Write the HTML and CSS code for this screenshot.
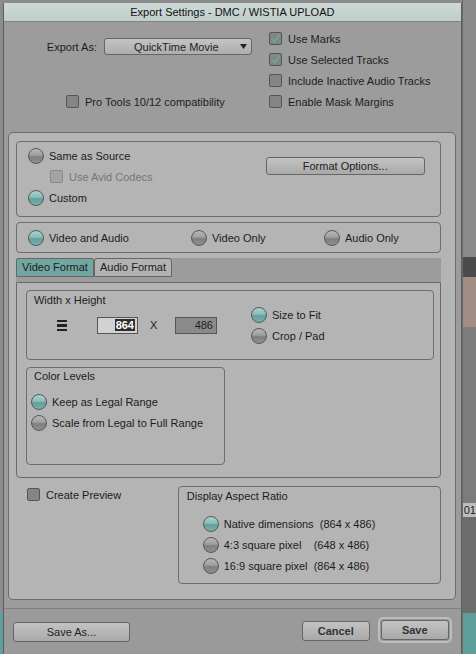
FILE: index.html
```html
<!DOCTYPE html>
<html>
<head>
<meta charset="utf-8">
<title>Export Settings</title>
<link rel="stylesheet" href="styles.css">
</head>
<body>
<div class="screen">
  <div class="edge-left"></div>
  <div class="window">
    <div class="titlebar">Export Settings - DMC / WISTIA UPLOAD</div>

    <div class="top">
      <div class="top-left">
        <div class="export-row">
          <span class="export-label">Export As:</span>
          <div class="dropdown">
            <span class="dropdown-text">QuickTime Movie</span>
            <svg class="dropdown-arrow" width="7" height="5" viewBox="0 0 7 5"><path d="M0 0H7L3.5 5Z" fill="#222"/></svg>
          </div>
        </div>
        <div class="check-row protools"><span class="cb"></span><span>Pro Tools 10/12 compatibility</span></div>
      </div>
      <div class="top-right">
        <div class="check-row"><span class="cb checked"><svg width="11" height="11" viewBox="0 0 11 11"><path d="M2 6 L4.5 9 L9.5 1.5" fill="none" stroke="#62aaa5" stroke-width="1.6"/></svg></span><span>Use Marks</span></div>
        <div class="check-row"><span class="cb checked"><svg width="11" height="11" viewBox="0 0 11 11"><path d="M2 6 L4.5 9 L9.5 1.5" fill="none" stroke="#62aaa5" stroke-width="1.6"/></svg></span><span>Use Selected Tracks</span></div>
        <div class="check-row"><span class="cb"></span><span>Include Inactive Audio Tracks</span></div>
        <div class="check-row"><span class="cb"></span><span>Enable Mask Margins</span></div>
      </div>
    </div>

    <div class="panel">
      <div class="group source">
        <div class="source-col">
          <div class="radio-row"><span class="radio"></span><span>Same as Source</span></div>
          <div class="check-row avid disabled"><span class="cb"></span><span>Use Avid Codecs</span></div>
          <div class="radio-row"><span class="radio on"></span><span>Custom</span></div>
        </div>
        <button class="btn format-btn">Format Options...</button>
      </div>

      <div class="group tracks">
        <div class="radio-row"><span class="radio on"></span><span>Video and Audio</span></div>
        <div class="radio-row"><span class="radio"></span><span>Video Only</span></div>
        <div class="radio-row"><span class="radio"></span><span>Audio Only</span></div>
      </div>

      <div class="tabs">
        <div class="tabbar">
          <div class="tab active">Video Format</div>
          <div class="tab">Audio Format</div>
        </div>
        <div class="tabbody">
          <div class="group wh">
            <div class="group-label">Width x Height</div>
            <div class="wh-row">
              <svg class="lock-icon" width="10" height="11" viewBox="0 0 10 11"><rect x="0" y="0" width="10" height="2" fill="#222"/><rect x="0" y="4" width="10" height="3" fill="#222"/><rect x="0" y="9" width="10" height="2" fill="#222"/></svg>
              <div class="field field-w"><span class="sel">864</span></div>
              <span class="times">X</span>
              <div class="field field-h">486</div>
              <div class="wh-radios">
                <div class="radio-row"><span class="radio on"></span><span>Size to Fit</span></div>
                <div class="radio-row"><span class="radio"></span><span>Crop / Pad</span></div>
              </div>
            </div>
          </div>
          <div class="group levels">
            <div class="group-label">Color Levels</div>
            <div class="levels-rows">
              <div class="radio-row"><span class="radio on"></span><span>Keep as Legal Range</span></div>
              <div class="radio-row"><span class="radio"></span><span>Scale from Legal to Full Range</span></div>
            </div>
          </div>
        </div>
      </div>

      <div class="lower">
        <div class="check-row preview"><span class="cb"></span><span>Create Preview</span></div>
        <div class="group dar">
          <div class="group-label">Display Aspect Ratio</div>
          <div class="dar-rows">
            <div class="radio-row"><span class="radio on"></span><span class="pre">Native dimensions  (864 x 486)</span></div>
            <div class="radio-row"><span class="radio"></span><span class="pre">4:3 square pixel    (648 x 486)</span></div>
            <div class="radio-row"><span class="radio"></span><span class="pre">16:9 square pixel  (864 x 486)</span></div>
          </div>
        </div>
      </div>
    </div>

    <div class="footer">
      <button class="btn saveas-btn">Save As...</button>
      <button class="btn bold cancel-btn">Cancel</button>
      <div class="focus-ring"><button class="btn bold save-btn">Save</button></div>
    </div>
  </div>
  <div class="edge-right">
    <div class="er er1"></div>
    <div class="er er2"></div>
    <div class="er er3"></div>
    <div class="er er4"></div>
    <div class="er er5">01</div>
    <div class="er er6"></div>
    <div class="er er7"></div>
  </div>
</div>
</body>
</html>
```

FILE: styles.css
```css
* { box-sizing: border-box; }
html, body { margin: 0; padding: 0; }
body {
  font-family: "Liberation Sans", Arial, sans-serif;
  font-size: 11px;
  color: #1c1c1c;
  background: #8b8b8b;
}
.screen {
  display: flex;
  width: 476px;
  height: 654px;
  overflow: hidden;
  background: #8b8b8b;
}
.edge-left {
  width: 3px;
  background: linear-gradient(#8c8c8c 0, #8c8c8c 612px, #5d9f9b 612px);
}
.window {
  width: 461px;
  height: 651px;
  margin-top: 3px;
  border-left: 1px solid #5e5e5e;
  border-right: 1px solid #5e5e5e;
  background: #9c9c9c;
  display: flex;
  flex-direction: column;
}
.titlebar {
  height: 19px;
  line-height: 18px;
  border-bottom: 1px solid #7c8786;
  background: linear-gradient(#cddad8, #bfcdcb);
  text-align: center;
  font-size: 11px;
  color: #111;
}

/* top section */
.top {
  height: 110px;
  padding-top: 6px;
  display: flex;
}
.top-left {
  width: 265px;
  height: 84px;
  display: flex;
  flex-direction: column;
  justify-content: space-between;
}
.export-row {
  display: flex;
  align-items: center;
  margin-top: 10px;
}
.export-label {
  width: 93px;
  text-align: right;
  margin-right: 7px;
}
.dropdown {
  width: 148px;
  height: 17px;
  border: 1px solid #666;
  border-radius: 3px;
  background: linear-gradient(#c4c4c4, #adadad);
  display: flex;
  align-items: center;
}
.dropdown-text {
  flex: 1;
  padding-left: 29px;
  color: #222;
  white-space: nowrap;
}
.dropdown-arrow { margin-right: 4px; flex: none; }
.top-right {
  display: flex;
  flex-direction: column;
}
.check-row {
  display: flex;
  align-items: center;
  height: 21px;
  gap: 6px;
}
.protools { padding-left: 62px; }
.cb {
  width: 13px;
  height: 13px;
  border: 1px solid #555;
  border-radius: 2px;
  background: #858585;
  display: inline-flex;
  align-items: center;
  justify-content: center;
  flex: none;
}
.disabled { color: #767676; }
.disabled .cb { background: #a4a4a4; border-color: #8a8a8a; }

/* main panel */
.panel {
  margin: 0 5px 0 4px;
  height: 468px;
  border: 1px solid #6b6b6b;
  border-radius: 5px;
  background: #b4b4b4;
  padding: 8px 14px 0 7px;
}
.group {
  border: 1px solid #6d6d6d;
  border-radius: 4px;
}
.source {
  height: 76px;
  padding: 3px 11px;
  display: flex;
  align-items: flex-start;
}
.source-col { display: flex; flex-direction: column; }
.radio-row {
  display: flex;
  align-items: center;
  height: 21px;
  gap: 5px;
  white-space: nowrap;
}
.radio {
  width: 16px;
  height: 16px;
  border-radius: 50%;
  border: 1px solid #575757;
  background: linear-gradient(#b8b8b8 0%, #9d9d9d 45%, #7f7f7f 55%, #8f8f8f 100%);
  flex: none;
}
.radio.on {
  background: linear-gradient(#a9d3d0 0%, #88bcb8 45%, #639f9b 55%, #78b0ac 100%);
}
.avid { padding-left: 22px; }
.btn {
  font-family: "Liberation Sans", Arial, sans-serif;
  font-size: 11px;
  color: #222;
  border: 1px solid #666;
  border-radius: 3px;
  background: linear-gradient(#c3c3c3, #a9a9a9);
  padding: 0;
  height: 20px;
}
.btn.bold { font-weight: bold; color: #333; }
.format-btn {
  width: 159px;
  height: 18px;
  margin: 12px 4px 0 auto;
}
.tracks {
  margin-top: 5px;
  height: 31px;
  padding: 0 11px;
  display: grid;
  grid-template-columns: 163px 133px auto;
  align-items: center;
}

/* tabs */
.tabs { margin-top: 5px; }
.tabbar {
  height: 24px;
  background: #9c9c9c;
  display: flex;
  align-items: flex-start;
}
.tab {
  height: 19px;
  line-height: 17px;
  padding: 0 5px;
  border: 1px solid #666;
  border-radius: 3px 3px 0 0;
  background: #b2b2b2;
  color: #1c1c1c;
  white-space: nowrap;
  text-align: center;
}
.tab.active {
  width: 78px;
  background: #72a6a2;
}
.tab + .tab { width: 78px; margin-left: 0; padding: 0; }
.tabbody {
  height: 196px;
  border: 1px solid #6a6a6a;
  border-radius: 0 0 4px 4px;
  background: #b4b4b4;
  padding: 7px 0 0 9px;
}
.group-label {
  line-height: 13px;
}
.wh {
  width: 408px;
  height: 70px;
  padding: 3px 0 0 7px;
}
.wh-row {
  display: flex;
  align-items: center;
  margin-top: -3px;
  padding-left: 23px;
}
.lock-icon { flex: none; }
.field {
  height: 17px;
  border: 1px solid #555;
  display: flex;
  align-items: center;
  justify-content: flex-end;
  padding-right: 2px;
  color: #222;
}
.field-w {
  width: 41px;
  margin-left: 30px;
  background: #d2d2d2;
}
.sel {
  background: #2e2e2e;
  color: #fff;
  font-weight: bold;
  line-height: 12px;
  padding: 0 1px;
}
.times {
  margin-left: 12px;
  width: 7px;
}
.field-h {
  width: 42px;
  margin-left: 18px;
  background: #8a8a8a;
  padding-right: 3px;
}
.wh-radios {
  margin-left: 34px;
  display: flex;
  flex-direction: column;
}
.levels {
  margin-top: 7px;
  width: 199px;
  height: 98px;
  padding: 2px 0 0 7px;
}
.levels-rows {
  margin: 8px 0 0 -3px;
}

/* lower */
.lower {
  margin-top: 8px;
  display: flex;
  align-items: flex-start;
}
.preview {
  padding-left: 11px;
  height: 17px;
}
.dar {
  margin-left: auto;
  width: 263px;
  height: 98px;
  padding: 3px 0 0 8px;
}
.dar-rows {
  margin: 10px 0 0 16px;
}
.pre { white-space: pre; }

/* footer */
.footer {
  margin-top: 8px;
  border-top: 1px solid #808080;
  flex: 1;
  display: flex;
  align-items: flex-start;
  padding: 0 9px;
  background: #9a9a9a;
}
.saveas-btn {
  width: 117px;
  margin-top: 13px;
}
.cancel-btn {
  width: 68px;
  margin-top: 12px;
  margin-left: auto;
}
.focus-ring {
  margin-top: 8px;
  margin-left: 8px;
  border: 2px solid #bdbdbd;
  border-radius: 5px;
  padding: 1px;
}
.save-btn { width: 68px; display: block; }

/* background app strip */
.edge-right {
  flex: 1;
  display: flex;
  flex-direction: column;
  border-left: 1px solid #6a6a6a;
}
.er { flex: none; }
.er1 { height: 257px; background: #8a8a8a; }
.er2 { height: 20px; background: #4a4a4a; }
.er3 { height: 50px; background: #a38c84; }
.er4 { height: 176px; background: #7c7c7c; }
.er5 { height: 14px; background: #bdbdbd; font-size: 11px; line-height: 14px; color: #222; padding-left: 1px; }
.er6 { height: 96px; background: #6c6c6c; }
.er7 { height: 41px; background: #5e9f9b; }
```
